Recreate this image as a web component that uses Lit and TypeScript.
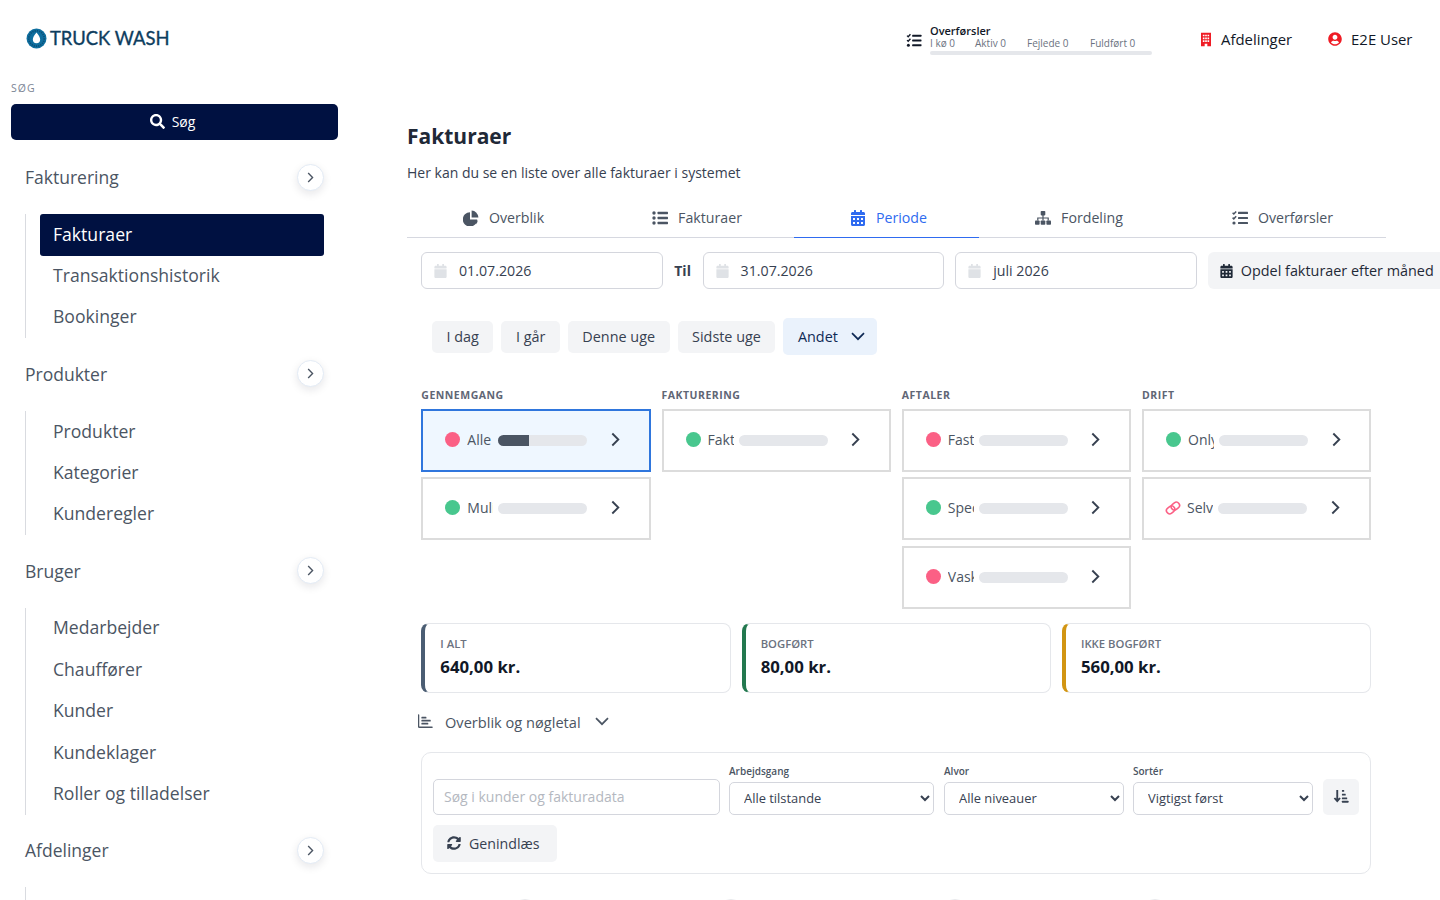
import { LitElement, html, css, svg } from 'lit';
import { customElement } from 'lit/decorators.js';

const ic = (vb: string, body: unknown, cls = 'ic') =>
  html`<svg class=${cls} viewBox=${vb} fill="currentColor" aria-hidden="true">${body}</svg>`;

const SEARCH = svg`<path d="M505 442.7L405.3 343c-4.5-4.5-10.6-7-17-7H372c27.6-35.3 44-79.7 44-128C416 93.1 322.9 0 208 0S0 93.1 0 208s93.1 208 208 208c48.3 0 92.7-16.4 128-44v16.3c0 6.4 2.5 12.5 7 17l99.7 99.7c9.4 9.4 24.6 9.4 33.9 0l28.3-28.3c9.4-9.4 9.4-24.6.1-34zM208 336c-70.7 0-128-57.2-128-128 0-70.7 57.2-128 128-128 70.7 0 128 57.2 128 128 0 70.7-57.2 128-128 128z"/>`;
const CAL_ALT = svg`<path d="M0 464c0 26.5 21.5 48 48 48h352c26.5 0 48-21.5 48-48V192H0v272zm320-196c0-6.6 5.4-12 12-12h40c6.6 0 12 5.4 12 12v40c0 6.6-5.4 12-12 12h-40c-6.6 0-12-5.4-12-12v-40zm0 128c0-6.6 5.4-12 12-12h40c6.6 0 12 5.4 12 12v40c0 6.6-5.4 12-12 12h-40c-6.6 0-12-5.4-12-12v-40zM192 268c0-6.6 5.4-12 12-12h40c6.6 0 12 5.4 12 12v40c0 6.6-5.4 12-12 12h-40c-6.6 0-12-5.4-12-12v-40zm0 128c0-6.6 5.4-12 12-12h40c6.6 0 12 5.4 12 12v40c0 6.6-5.4 12-12 12h-40c-6.6 0-12-5.4-12-12v-40zM64 268c0-6.6 5.4-12 12-12h40c6.6 0 12 5.4 12 12v40c0 6.6-5.4 12-12 12H76c-6.6 0-12-5.4-12-12v-40zm0 128c0-6.6 5.4-12 12-12h40c6.6 0 12 5.4 12 12v40c0 6.6-5.4 12-12 12H76c-6.6 0-12-5.4-12-12v-40zM400 64h-48V16c0-8.8-7.2-16-16-16h-32c-8.8 0-16 7.2-16 16v48H160V16c0-8.8-7.2-16-16-16h-32c-8.8 0-16 7.2-16 16v48H48C21.5 64 0 85.5 0 112v48h448v-48c0-26.5-21.5-48-48-48z"/>`;
const CAL = svg`<path d="M12 192h424c6.6 0 12 5.4 12 12v260c0 26.5-21.5 48-48 48H48c-26.5 0-48-21.5-48-48V204c0-6.6 5.4-12 12-12zm436-44v-36c0-26.5-21.5-48-48-48h-48V12c0-6.6-5.4-12-12-12h-40c-6.6 0-12 5.4-12 12v52H160V12c0-6.6-5.4-12-12-12h-40c-6.6 0-12 5.4-12 12v52H48C21.5 64 0 85.5 0 112v36c0 6.6 5.4 12 12 12h424c6.6 0 12-5.4 12-12z"/>`;
const USER_CIRCLE = svg`<path d="M248 8C111 8 0 119 0 256s111 248 248 248 248-111 248-248S385 8 248 8zm0 96c48.6 0 88 39.4 88 88s-39.4 88-88 88-88-39.4-88-88 39.4-88 88-88zm0 344c-58.7 0-111.3-26.6-146.5-68.2 18.8-35.4 55.6-59.8 98.5-59.8 2.4 0 4.8.4 7.1 1.1 13 4.2 26.6 6.9 40.9 6.9 14.3 0 28-2.7 40.9-6.9 2.3-.7 4.7-1.1 7.1-1.1 42.9 0 79.7 24.4 98.5 59.8C359.3 421.4 306.7 448 248 448z"/>`;
const SYNC = svg`<path d="M370.72 133.28C339.458 104.008 298.888 87.962 255.848 88c-77.458.068-144.328 53.178-162.791 126.85-1.344 5.363-6.122 9.15-11.651 9.15H24.103c-7.498 0-13.194-6.807-11.807-14.176C33.933 94.924 134.813 8 256 8c66.448 0 126.791 26.136 171.315 68.685L463.03 40.97C478.149 25.851 504 36.559 504 57.941V192c0 13.255-10.745 24-24 24H345.941c-21.382 0-32.09-25.851-16.971-40.971l41.75-41.749zM32 296h134.059c21.382 0 32.09 25.851 16.971 40.971l-41.75 41.75c31.262 29.273 71.835 45.319 114.876 45.28 77.418-.07 144.315-53.144 162.787-126.849 1.344-5.363 6.122-9.15 11.651-9.15h57.304c7.498 0 13.194 6.807 11.807 14.176C478.067 417.076 377.187 504 256 504c-66.448 0-126.791-26.136-171.315-68.685L48.97 471.03C33.851 486.149 8 475.441 8 454.059V320c0-13.255 10.745-24 24-24z"/>`;
const LIST = svg`<circle cx="2" cy="3" r="1.7"/><circle cx="2" cy="8" r="1.7"/><circle cx="2" cy="13" r="1.7"/><rect x="5.5" y="1.8" width="10.5" height="2.4" rx=".6"/><rect x="5.5" y="6.8" width="10.5" height="2.4" rx=".6"/><rect x="5.5" y="11.8" width="10.5" height="2.4" rx=".6"/>`;
const TASKS = svg`<path d="M.6 2.8l1.2 1.2L4.2 1.4" fill="none" stroke="currentColor" stroke-width="1.5"/><path d="M.6 7.6l1.2 1.2 2.4-2.6" fill="none" stroke="currentColor" stroke-width="1.5"/><circle cx="2" cy="13" r="1.6"/><rect x="6" y="1.8" width="10" height="2.2" rx=".5"/><rect x="6" y="6.9" width="10" height="2.2" rx=".5"/><rect x="6" y="11.9" width="10" height="2.2" rx=".5"/>`;
const PIE = svg`<path d="M7 2.2v7.2h7.2A7.2 7.2 0 1 1 7 2.2z"/><path d="M8.6.6a7 7 0 0 1 6.8 6.8H8.6z"/><path d="M9.6 10.6h5.2a7 7 0 0 1-1.8 3.6z"/>`;
const SITEMAP = svg`<rect x="5.7" y="1" width="4.6" height="4.4" rx=".8"/><rect x="0" y="10.4" width="4.6" height="4.4" rx=".8"/><rect x="5.7" y="10.4" width="4.6" height="4.4" rx=".8"/><rect x="11.4" y="10.4" width="4.6" height="4.4" rx=".8"/><path d="M7.4 5h1.2v2.4h5.2v3.2h-1.2V8.6H8.6v2H7.4v-2H3.4v2H2.2V7.4h5.2z"/>`;
const BUILDING = svg`<path fill-rule="evenodd" d="M0 0h12v16H7.6v-3H4.4v3H0zM2.2 2.2v2h2v-2zm2.8 0v2h2v-2zm2.8 0v2h2v-2zM2.2 5.6v2h2v-2zm2.8 0v2h2v-2zm2.8 0v2h2v-2zM2.2 9v2h2V9zm2.8 0v2h2V9zm2.8 0v2h2V9z"/>`;
const BARS = svg`<path d="M.6 1v12.2a1 1 0 0 0 1 1H15" fill="none" stroke="currentColor" stroke-width="1.5" stroke-linecap="round"/><rect x="3.6" y="3" width="5.4" height="1.8" rx=".6"/><rect x="3.6" y="6.2" width="10" height="1.8" rx=".6"/><rect x="3.6" y="9.4" width="7.4" height="1.8" rx=".6"/>`;
const SORT = svg`<path d="M4 1v12M1 9.6L4 13l3-3.4" fill="none" stroke="currentColor" stroke-width="2"/><rect x="9" y="1" width="2.4" height="2" rx=".4"/><rect x="9" y="5" width="4" height="2" rx=".4"/><rect x="9" y="9" width="5.6" height="2" rx=".4"/><rect x="9" y="12.6" width="7" height="2" rx=".4"/>`;
const LINK = svg`<g fill="none" stroke="currentColor" stroke-width="1.6" transform="rotate(-38 9 7)"><rect x="1.6" y="3.8" width="8.8" height="6.4" rx="3.2"/><rect x="7.6" y="3.8" width="8.8" height="6.4" rx="3.2"/></g>`;
const DROP = svg`<circle cx="12" cy="12" r="11.4" fill="#0f6f9f"/><circle cx="12" cy="12" r="8.8" fill="none" stroke="#0b5078" stroke-width="2" stroke-dasharray="1.4 1.2"/><path d="M12 5.2c2.6 3.4 4.2 5.6 4.2 8a4.2 4.2 0 0 1-8.4 0c0-2.4 1.6-4.6 4.2-8z" fill="#fff"/>`;

const chevronRight = html`<svg class="chev" viewBox="0 0 10 16" fill="none" stroke="currentColor" stroke-width="2"><path d="M1.6 1.6L8 8l-6.4 6.4"/></svg>`;
const chevronDown = html`<svg class="chev-down" viewBox="0 0 14 9" fill="none" stroke="currentColor" stroke-width="1.7"><path d="M1 1.2l6 6 6-6"/></svg>`;

const NAV = [
  { title: 'Fakturering', items: ['Fakturaer', 'Transaktionshistorik', 'Bookinger'] },
  { title: 'Produkter', items: ['Produkter', 'Kategorier', 'Kunderegler'] },
  { title: 'Bruger', items: ['Medarbejder', 'Chauffører', 'Kunder', 'Kundeklager', 'Roller og tilladelser'] },
  { title: 'Afdelinger', items: ['Afdelinger'] },
];

const TABS = [
  { label: 'Overblik', icon: ic('0 0 16 16', PIE) },
  { label: 'Fakturaer', icon: ic('0 0 16 16', LIST) },
  { label: 'Periode', icon: ic('0 0 448 512', CAL_ALT), active: true },
  { label: 'Fordeling', icon: ic('0 0 16 16', SITEMAP) },
  { label: 'Overførsler', icon: ic('0 0 16 16', TASKS) },
];

type Card = { label: string; tone: 'red' | 'green' | 'link'; fill?: number; selected?: boolean };
const COLUMNS: { title: string; cards: Card[] }[] = [
  {
    title: 'Gennemgang',
    cards: [
      { label: 'Alle fakturaer', tone: 'red', fill: 34, selected: true },
      { label: 'Mulige fejl', tone: 'green' },
    ],
  },
  { title: 'Fakturering', cards: [{ label: 'Fakturaklar', tone: 'green' }] },
  {
    title: 'Aftaler',
    cards: [
      { label: 'Fast pris', tone: 'red' },
      { label: 'Special', tone: 'green' },
      { label: 'Vaskekort', tone: 'red' },
    ],
  },
  {
    title: 'Drift',
    cards: [
      { label: 'Only', tone: 'green' },
      { label: 'Selvbetjening', tone: 'link' },
    ],
  },
];

const TOTALS = [
  { label: 'I alt', value: '640,00 kr.', cls: 'slate' },
  { label: 'Bogført', value: '80,00 kr.', cls: 'forest' },
  { label: 'Ikke bogført', value: '560,00 kr.', cls: 'amber' },
];

const FILTERS = [
  { label: 'Arbejdsgang', value: 'Alle tilstande', cls: 'f-flow' },
  { label: 'Alvor', value: 'Alle niveauer', cls: 'f-level' },
  { label: 'Sortér', value: 'Vigtigst først', cls: 'f-sort' },
];

@customElement('app-root')
export class AppRoot extends LitElement {
  static override styles = css`
    :host {
      display: block;
      height: 100vh;
      overflow: hidden;
      background: #fff;
      color: #374151;
      font-family: 'Open Sans', 'Noto Sans', sans-serif;
      font-size: 14px;
    }
    * { box-sizing: border-box; }
    .ic { width: 14px; height: 14px; flex: none; display: block; }
    .chev { width: 10px; height: 14px; flex: none; }
    .chev-down { width: 14px; height: 9px; flex: none; }

    /* top bar */
    .top { display: flex; align-items: flex-start; height: 78px; }
    .logo { display: flex; align-items: center; gap: 3px; margin: 27px 0 0 26px; width: 142px; flex: none; }
    .logo svg { width: 21px; height: 21px; }
    .logo span { font: 400 18.4px Lato, sans-serif; -webkit-text-stroke: .35px #0d3d5e; color: #0d3d5e; white-space: nowrap; }
    .transfers { display: flex; gap: 7px; margin: 25px 0 0 738px; width: 246px; flex: none; color: #111827; }
    .transfers > .ic { margin-top: 8px; width: 16px; height: 15px; }
    .tr-body { flex: 1; padding-left: 1px; }
    .tr-title { font-size: 11px; font-weight: 600; line-height: 12px; color: #111827; }
    .tr-stats { display: flex; font-size: 10px; line-height: 12px; color: #6b7280; white-space: nowrap; }
    .tr-stats span:nth-child(1) { width: 45px; }
    .tr-stats span:nth-child(2) { width: 52px; }
    .tr-stats span:nth-child(3) { width: 63px; }
    .tr-bar { height: 4px; background: #e5e7eb; border-radius: 2px; margin-top: 2px; }
    .top-link { display: flex; align-items: center; color: #111827; font-size: 14.9px; margin-top: 29px; white-space: nowrap; flex: none; }
    .top-link svg { color: #ef1c25; }
    .dept { margin-left: 49px; gap: 10px; }
    .dept svg { width: 10px; height: 15px; }
    .user { margin-left: 36px; gap: 9px; }
    .user svg { width: 14px; height: 14px; }

    .layout { display: flex; align-items: flex-start; }

    /* sidebar */
    aside { width: 338px; margin-left: 11px; flex: none; }
    .side-label { font-size: 10.5px; letter-spacing: 1px; color: #7b8494; line-height: 12px; margin-top: 4px; }
    .side-search {
      display: flex; align-items: center; justify-content: center; gap: 7px;
      width: 327px; height: 36px; margin-top: 10px; padding: 0 4px 2px 0; border: 0; border-radius: 5px;
      background: #001141; color: #fff; font: inherit; font-size: 14px;
    }
    .side-search .ic { width: 15px; height: 15px; }
    .group-head { display: flex; align-items: center; justify-content: space-between; height: 26px; margin: 22.7px 14px 0 14px; width: 299px; }
    .side-search + .group-head { margin-top: 24px; }
    .group-head span { font-size: 17.5px; color: #4b5563; }
    .toggle {
      width: 27px; height: 27px; border-radius: 50%; border: 1px solid #e3ebf5; background: #fff;
      display: flex; align-items: center; justify-content: center; color: #4b5563;
      box-shadow: 0 3px 8px rgba(15, 23, 42, .10);
    }
    .toggle .chev { width: 7px; height: 11px; }
    .sub { list-style: none; margin: 24px 0 0 14px; padding: 0 0 0 14px; border-left: 1px solid #d9dbe0; width: 299px; }
    .sub li { height: 41.4px; display: flex; align-items: center; padding: 0 0 2px 13px; font-size: 17.6px; color: #4b5563; border-radius: 3px; }
    .sub li.on { height: 42px; margin-bottom: -.6px; background: #001141; color: #fff; }

    /* main */
    main { width: 979px; margin-left: 58px; flex: none; }
    h1 { font-size: 21px; font-weight: 700; color: #1f2937; margin: 43px 0 0; line-height: 30px; }
    .lead { font-size: 14px; line-height: 20px; margin: 12px 0 0; color: #374151; }
    .tabs { display: grid; grid-template-columns: 193px 194px 185px 200px 207px; height: 40px; margin-top: 15px; border-bottom: 1px solid #d6d8e0; }
    .tab { display: flex; align-items: center; justify-content: center; gap: 10px; color: #4b5563; font-size: 14.2px; height: 40px; border-bottom: 1px solid transparent; }
    .tab svg { width: 16px; height: 16px; }
    .tab.on { padding-left: 4px; color: #2f6bf0; border-bottom-color: #2f6bf0; }
    .content { padding-left: 14px; }

    .dates { display: flex; align-items: center; margin-top: 14px; white-space: nowrap; }
    .date { display: flex; align-items: center; gap: 12px; width: 241.6px; height: 37px; padding-left: 12px; border: 1px solid #d4d6dd; border-radius: 6px; font-size: 14.2px; color: #374151; flex: none; }
    .date .ic { width: 13px; height: 14px; color: #dfe2e6; }
    .til { font-weight: 700; font-size: 14px; width: 40px; text-align: center; color: #374151; flex: none; }
    .date.month { margin-left: 11px; }
    .split { display: flex; align-items: center; gap: 8px; height: 37px; margin-left: 11px; padding: 0 12px; background: #f3f4f6; border: 0; border-radius: 6px; color: #1f2937; font: inherit; font-size: 14.4px; flex: none; }
    .split .ic { width: 13px; height: 14px; }

    .quick { display: flex; align-items: center; gap: 8px; margin: 29px 0 0 11px; }
    .quick button { height: 32px; padding: 0 14.5px; border: 0; border-radius: 5px; background: #f3f4f6; color: #374151; font: inherit; font-size: 14.4px; }
    .quick button.more { height: 37px; display: flex; align-items: center; gap: 13px; padding: 0 12px 0 14.5px; background: #eaf2fc; color: #0f2a55; }

    .board { display: grid; grid-template-columns: repeat(4, 1fr); gap: 11px; width: 950px; margin: 33px 0 0 .3px; }
    .col-title { font-size: 10.5px; font-weight: 700; letter-spacing: .5px; text-transform: uppercase; color: #5f6675; line-height: 14px; margin-bottom: 7px; }
    .col-cards { display: flex; flex-direction: column; gap: 5.4px; }
    .card { display: flex; align-items: center; height: 63px; padding-left: 22px; border: 2px solid #dcdcdc; background: #fff; }
    .card.sel { border-color: #2f76dd; background: #eff7ff; }
    .dot { width: 15px; height: 15px; border-radius: 50%; flex: none; margin-top: -2px; }
    .dot.red { background: #fb6085; }
    .dot.green { background: #48c78e; }
    .link-ic { width: 18px; height: 14px; margin: -2px -2px 0 -2px; color: #fb6085; flex: none; }
    .card-name { width: 26px; margin: -2px 0 0 7px; overflow: hidden; white-space: nowrap; font-size: 14px; color: #4b5563; flex: none; }
    .bar { width: 89px; height: 11px; margin-left: 5px; border-radius: 6px; background: #e5e7eb; overflow: hidden; flex: none; }
    .bar i { display: block; height: 100%; background: #4b5563; }
    .card .chev { width: 11px; height: 15px; margin: -2px 0 0 22.5px; color: #374151; }

    .totals { display: grid; grid-template-columns: repeat(3, 1fr); gap: 11px; width: 950px; margin: 14px 0 0 .3px; }
    .total { height: 70px; padding: 13px 15px; border: 1px solid #e5e7eb; border-left-width: 4px; border-radius: 8px; }
    .total.slate { border-left-color: #4b5d73; }
    .total.forest { border-left-color: #23784f; }
    .total.amber { border-left-color: #d29512; }
    .total small { display: block; font-size: 11.3px; font-weight: 600; line-height: 14px; text-transform: uppercase; color: #6b7280; }
    .total b { display: block; font-size: 16.8px; font-weight: 700; line-height: 24px; margin-top: 4px; color: #111827; }

    .overview { display: flex; align-items: center; height: 20px; margin: 19px 0 0 -3px; font-size: 14.6px; color: #4b5563; }
    .overview .ic { width: 15px; height: 15px; color: #4b5563; }
    .overview span { margin-left: 12px; }
    .overview .chev-down { margin-left: 14px; }

    .panel { width: 950px; height: 122px; margin-top: 20px; padding: 11px; border: 1px solid #e5e7eb; border-radius: 10px; }
    .filter-row { display: flex; align-items: flex-end; }
    .search-input { width: 287px; height: 36px; padding: 0 10px; border: 1px solid #d4d6dd; border-radius: 5px; font: inherit; font-size: 14px; color: #374151; }
    .search-input::placeholder { color: #b4b8c0; }
    .field { flex: none; margin-left: 10px; }
    .field.f-flow { margin-left: 9px; width: 205px; }
    .field.f-level { width: 180px; }
    .field.f-sort { margin-left: 9px; width: 180px; }
    .field label { display: block; font-size: 10px; font-weight: 600; line-height: 14px; margin-bottom: 4px; color: #4b5563; }
    select { width: 100%; height: 33px; padding: 0 10px; border: 1px solid #d4d6dd; border-radius: 5px; background: #fff; font: inherit; font-size: 12.9px; color: #374151; }
    .sort-btn { display: flex; align-items: center; justify-content: center; width: 36px; height: 36px; margin-left: 10px; border: 0; border-radius: 5px; background: #f3f4f6; color: #374151; flex: none; }
    .sort-btn .ic { width: 16px; height: 15px; }
    .reload { display: flex; align-items: center; gap: 8px; height: 37px; margin-top: 10px; padding: 0 17px 0 14px; border: 0; border-radius: 5px; background: #f3f4f6; color: #374151; font: inherit; font-size: 14.2px; }

    /* top edge of the next row, only just inside the fold */
    .next-row { display: flex; margin-top: 25px; }
    .next-row i { width: 26px; height: 26px; flex: none; border: 1px solid #e8e9ec; border-radius: 50%; }
    .next-row i:nth-child(1) { margin-left: 91px; }
    .next-row i:nth-child(2) { margin-left: 180px; }
    .next-row i:nth-child(3) { margin-left: 198px; }
    .next-row i:nth-child(4) { margin-left: 174px; }
  `;

  private _renderNav() {
    return NAV.map(
      (g, gi) => html`
        <div class="group-head">
          <span>${g.title}</span>
          <div class="toggle">${chevronRight}</div>
        </div>
        <ul class="sub">
          ${g.items.map((it, i) => html`<li class=${gi === 0 && i === 0 ? 'on' : ''}>${it}</li>`)}
        </ul>
      `
    );
  }

  private _renderCard(c: Card) {
    return html`
      <div class="card ${c.selected ? 'sel' : ''}">
        ${c.tone === 'link'
          ? ic('0 0 18 14', LINK, 'link-ic')
          : html`<span class="dot ${c.tone}"></span>`}
        <span class="card-name">${c.label}</span>
        <span class="bar"><i style="width:${c.fill ?? 0}%"></i></span>
        ${chevronRight}
      </div>
    `;
  }

  override render() {
    return html`
      <header class="top">
        <div class="logo">${ic('0 0 24 24', DROP)}<span>TRUCK WASH</span></div>
        <div class="transfers">
          ${ic('0 0 16 16', TASKS)}
          <div class="tr-body">
            <div class="tr-title">Overførsler</div>
            <div class="tr-stats"><span>I kø 0</span><span>Aktiv 0</span><span>Fejlede 0</span><span>Fuldført 0</span></div>
            <div class="tr-bar"></div>
          </div>
        </div>
        <div class="top-link dept">${ic('0 0 12 16', BUILDING)}Afdelinger</div>
        <div class="top-link user">${ic('0 0 496 512', USER_CIRCLE)}E2E User</div>
      </header>
      <div class="layout">
        <aside>
          <div class="side-label">SØG</div>
          <button class="side-search">${ic('0 0 512 512', SEARCH)}Søg</button>
          ${this._renderNav()}
        </aside>
        <main>
          <h1>Fakturaer</h1>
          <p class="lead">Her kan du se en liste over alle fakturaer i systemet</p>
          <nav class="tabs">
            ${TABS.map((t) => html`<div class="tab ${t.active ? 'on' : ''}">${t.icon}${t.label}</div>`)}
          </nav>
          <div class="content">
            <div class="dates">
              <div class="date">${ic('0 0 448 512', CAL)}01.07.2026</div>
              <span class="til">Til</span>
              <div class="date">${ic('0 0 448 512', CAL)}31.07.2026</div>
              <div class="date month">${ic('0 0 448 512', CAL)}juli 2026</div>
              <button class="split">${ic('0 0 448 512', CAL_ALT)}Opdel fakturaer efter måned</button>
            </div>
            <div class="quick">
              <button>I dag</button>
              <button>I går</button>
              <button>Denne uge</button>
              <button>Sidste uge</button>
              <button class="more">Andet ${chevronDown}</button>
            </div>
            <section class="board">
              ${COLUMNS.map(
                (col) => html`
                  <div>
                    <div class="col-title">${col.title}</div>
                    <div class="col-cards">${col.cards.map((c) => this._renderCard(c))}</div>
                  </div>
                `
              )}
            </section>
            <section class="totals">
              ${TOTALS.map((t) => html`<div class="total ${t.cls}"><small>${t.label}</small><b>${t.value}</b></div>`)}
            </section>
            <div class="overview">${ic('0 0 16 16', BARS)}<span>Overblik og nøgletal</span>${chevronDown}</div>
            <section class="panel">
              <div class="filter-row">
                <input class="search-input" placeholder="Søg i kunder og fakturadata" />
                ${FILTERS.map(
                  (f) => html`
                    <div class="field ${f.cls}">
                      <label>${f.label}</label>
                      <select><option>${f.value}</option></select>
                    </div>
                  `
                )}
                <button class="sort-btn">${ic('0 0 16 16', SORT)}</button>
              </div>
              <button class="reload">${ic('0 0 512 512', SYNC)}Genindlæs</button>
            </section>
            <div class="next-row"><i></i><i></i><i></i><i></i></div>
          </div>
        </main>
      </div>
    `;
  }
}
